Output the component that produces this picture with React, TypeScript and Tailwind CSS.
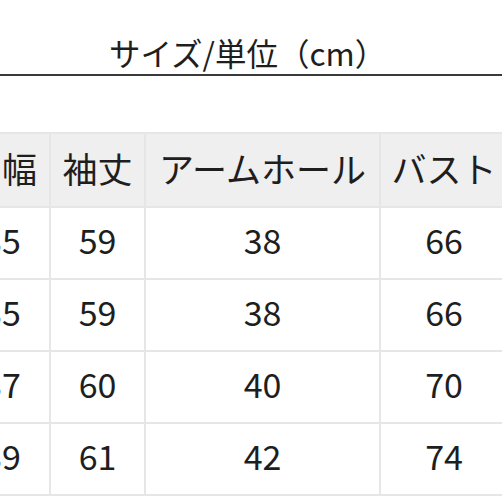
import React from "react";

const headers = ["肩幅", "袖丈", "アームホール", "バスト"];
const rows = [
  ["35", "59", "38", "66"],
  ["35", "59", "38", "66"],
  ["37", "60", "40", "70"],
  ["39", "61", "42", "74"],
];

export default function App() {
  return (
    <div
      className="w-[502px] h-[502px] overflow-hidden bg-white text-[#1e1e1e]"
      style={{ fontFamily: '"Noto Sans CJK JP", "Noto Sans", sans-serif' }}
    >
      <div className="h-[74px] flex items-end pl-[109px] pb-[6px]">
        <span className="text-[31.5px] leading-none">サイズ/単位（cm）</span>
      </div>
      <div className="h-[2px] bg-[#3a3a3a]" />
      <div className="mt-[56px] ml-[-47px] w-[600px]">
        <div className="grid grid-cols-[94px_93px_233px_126px] gap-[2px] bg-[#e6e6e6] p-[2px] w-max">
          {headers.map((h) => (
            <div
              key={h}
              className="h-[72px] pb-[6px] bg-[#efefef] flex items-center justify-center text-[35px] leading-none whitespace-nowrap"
            >
              {h}
            </div>
          ))}
          {rows.map((r, i) =>
            r.map((c, j) => (
              <div
                key={`${i}-${j}`}
                className="h-[70px] pb-[6px] bg-white flex items-center justify-center text-[34px] leading-none"
              >
                {c}
              </div>
            ))
          )}
        </div>
      </div>
    </div>
  );
}
